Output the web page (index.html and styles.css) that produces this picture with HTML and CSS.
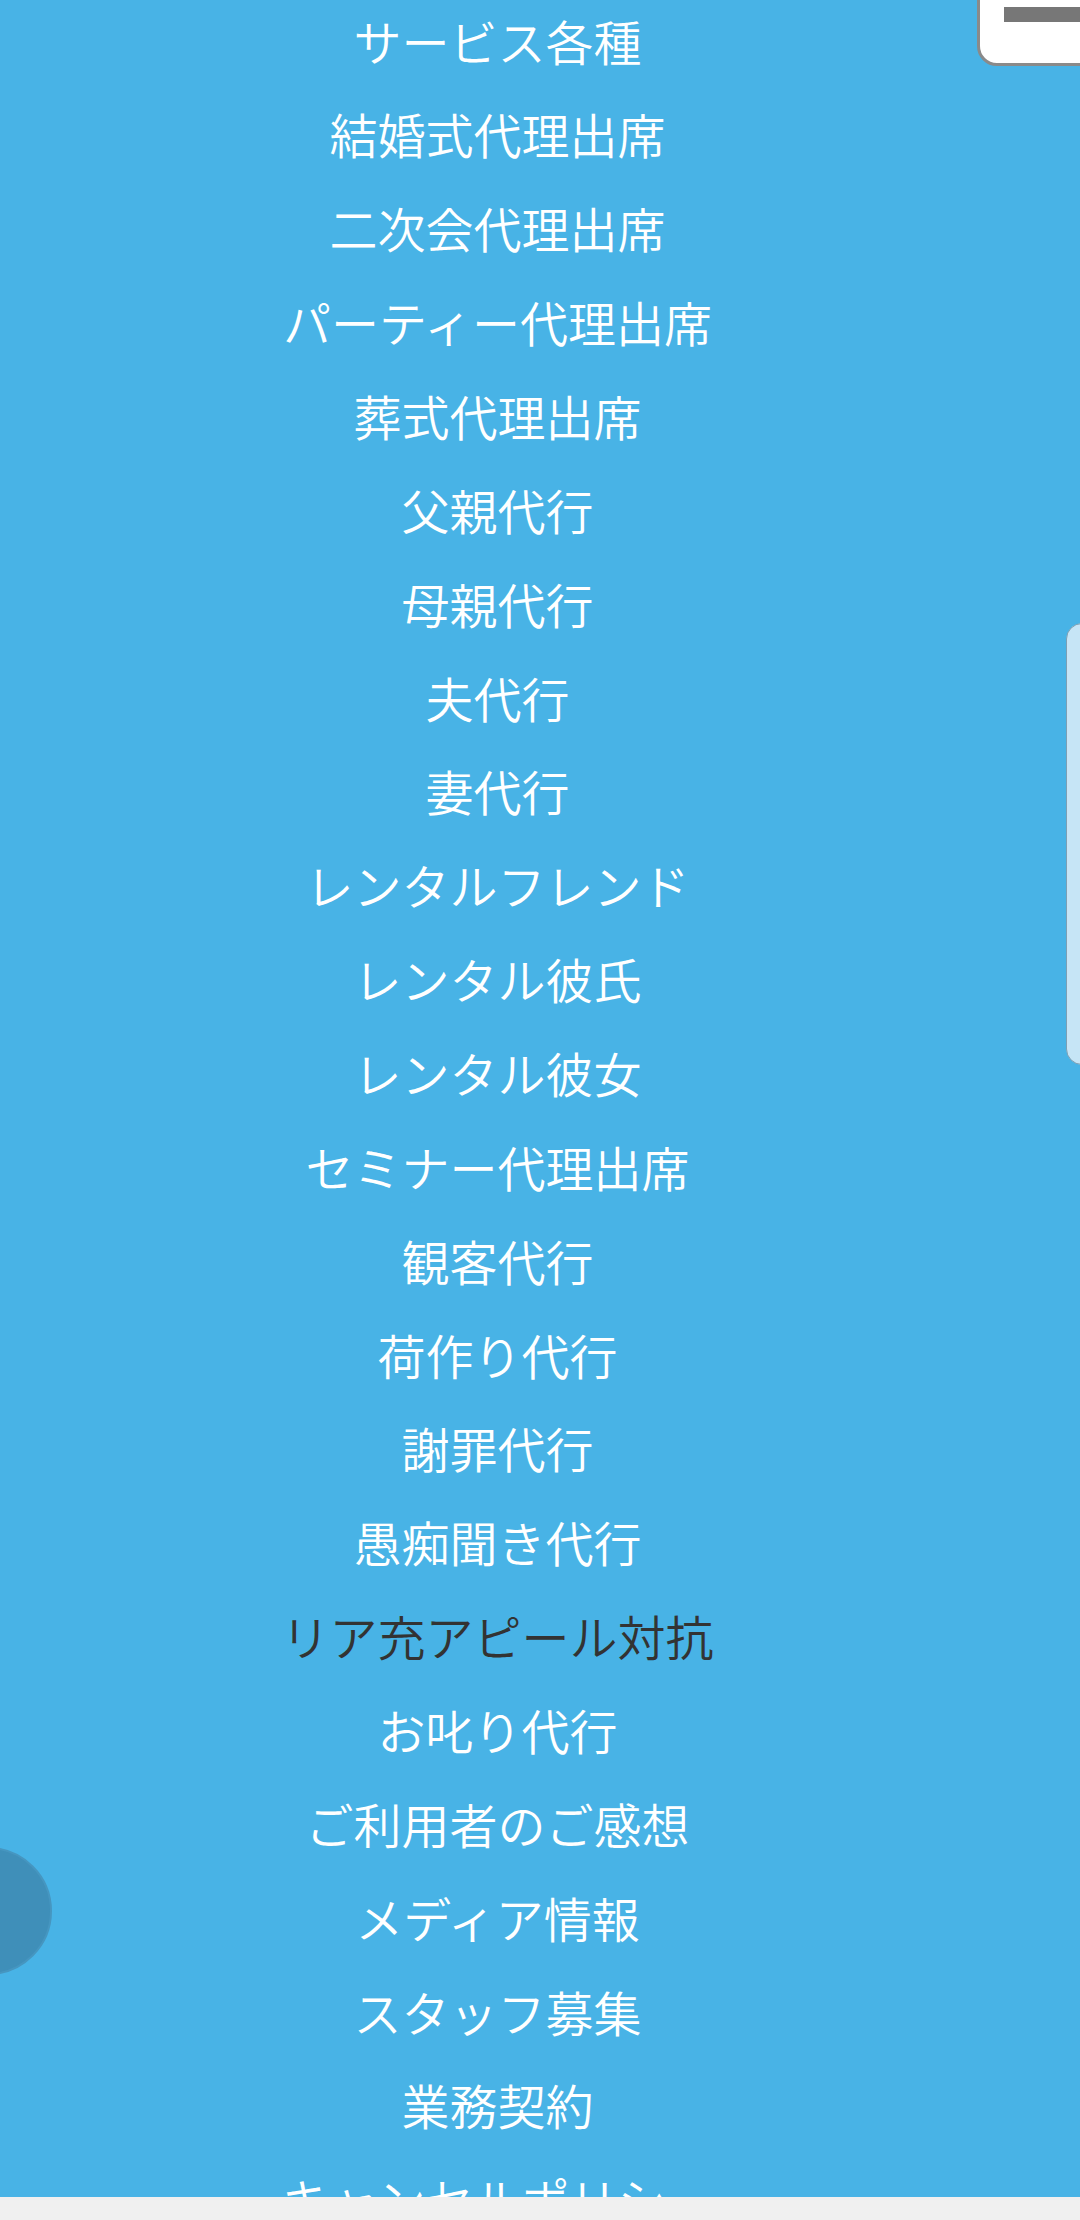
FILE: index.html
```html
<!DOCTYPE html>
<html lang="ja">
<head>
<meta charset="utf-8">
<title>メニュー</title>
<link rel="stylesheet" href="styles.css">
</head>
<body>
<div class="page">
  <nav class="menu">
    <a class="item">サービス各種</a>
    <a class="item">結婚式代理出席</a>
    <a class="item">二次会代理出席</a>
    <a class="item">パーティー代理出席</a>
    <a class="item">葬式代理出席</a>
    <a class="item">父親代行</a>
    <a class="item">母親代行</a>
    <a class="item">夫代行</a>
    <a class="item">妻代行</a>
    <a class="item">レンタルフレンド</a>
    <a class="item">レンタル彼氏</a>
    <a class="item">レンタル彼女</a>
    <a class="item">セミナー代理出席</a>
    <a class="item">観客代行</a>
    <a class="item">荷作り代行</a>
    <a class="item">謝罪代行</a>
    <a class="item">愚痴聞き代行</a>
    <a class="item active">リア充アピール対抗</a>
    <a class="item">お叱り代行</a>
    <a class="item">ご利用者のご感想</a>
    <a class="item">メディア情報</a>
    <a class="item">スタッフ募集</a>
    <a class="item">業務契約</a>
    <a class="item">キャンセルポリシー</a>
  </nav>
  <div class="menu-btn"><span class="bar"></span></div>
  <div class="side-tab"></div>
  <div class="float-circle"></div>
  <div class="bottom-bar"></div>
</div>
</body>
</html>
```
FILE: styles.css
```css
html, body {
  margin: 0;
  padding: 0;
  width: 1080px;
  height: 2220px;
  overflow: hidden;
  background: #48b3e6;
}
.page {
  position: relative;
  width: 1080px;
  height: 2220px;
  overflow: hidden;
  background: #48b3e6;
  font-family: "Noto Sans CJK JP", "Noto Sans", sans-serif;
  font-weight: 350;
}
.menu {
  display: flex;
  flex-direction: column;
  width: 995px;
  margin-top: -6.5px;
}
.item {
  display: block;
  text-align: center;
  font-size: 48px;
  line-height: 93.87px;
  height: 93.87px;
  color: #ffffff;
  white-space: nowrap;
}
.item.active {
  color: #333333;
}
.menu-btn {
  position: absolute;
  left: 977px;
  top: -20px;
  width: 130px;
  height: 80px;
  background: #ffffff;
  border: 3px solid #8a8a8a;
  border-radius: 20px;
}
.menu-btn .bar {
  position: absolute;
  left: 24px;
  top: 24px;
  width: 110px;
  height: 15px;
  background: #777777;
}
.side-tab {
  position: absolute;
  left: 1066px;
  top: 623px;
  width: 40px;
  height: 440px;
  background: #c6e5f6;
  border: 1.5px solid #7d9fb3;
  border-radius: 16px;
}
.float-circle {
  position: absolute;
  left: -76px;
  top: 1847px;
  width: 124px;
  height: 124px;
  border-radius: 50%;
  background: #3f8fb9;
  border: 2px solid #4696c0;
}
.bottom-bar {
  position: absolute;
  left: 0;
  top: 2197px;
  width: 1080px;
  height: 23px;
  background: #f0f0f0;
}
```
